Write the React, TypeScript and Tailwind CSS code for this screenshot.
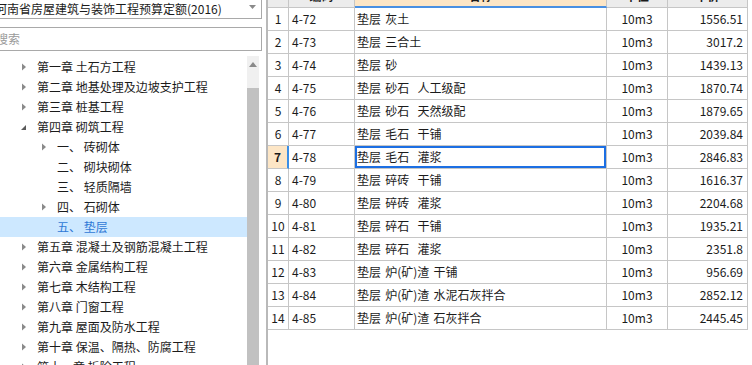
import React from "react";

type TreeItem = {
  level: 1 | 2;
  label: string;
  arrow: "right" | "down" | "none";
  selected?: boolean;
};

const treeItems: TreeItem[] = [
  { level: 1, label: "第一章 土石方工程", arrow: "right" },
  { level: 1, label: "第二章 地基处理及边坡支护工程", arrow: "right" },
  { level: 1, label: "第三章 桩基工程", arrow: "right" },
  { level: 1, label: "第四章 砌筑工程", arrow: "down" },
  { level: 2, label: "一、 砖砌体", arrow: "right" },
  { level: 2, label: "二、 砌块砌体", arrow: "none" },
  { level: 2, label: "三、 轻质隔墙", arrow: "none" },
  { level: 2, label: "四、 石砌体", arrow: "right" },
  { level: 2, label: "五、 垫层", arrow: "none", selected: true },
  { level: 1, label: "第五章 混凝土及钢筋混凝土工程", arrow: "right" },
  { level: 1, label: "第六章 金属结构工程", arrow: "right" },
  { level: 1, label: "第七章 木结构工程", arrow: "right" },
  { level: 1, label: "第八章 门窗工程", arrow: "right" },
  { level: 1, label: "第九章 屋面及防水工程", arrow: "right" },
  { level: 1, label: "第十章 保温、隔热、防腐工程", arrow: "right" },
  { level: 1, label: "第十一章 拆除工程", arrow: "right" },
];

const rows = [
  ["4-72", "垫层 灰土", "1556.51"],
  ["4-73", "垫层 三合土", "3017.2"],
  ["4-74", "垫层 砂", "1439.13"],
  ["4-75", "垫层 砂石  人工级配", "1870.74"],
  ["4-76", "垫层 砂石  天然级配", "1879.65"],
  ["4-77", "垫层 毛石  干铺", "2039.84"],
  ["4-78", "垫层 毛石  灌浆", "2846.83"],
  ["4-79", "垫层 碎砖  干铺", "1616.37"],
  ["4-80", "垫层 碎砖  灌浆", "2204.68"],
  ["4-81", "垫层 碎石  干铺", "1935.21"],
  ["4-82", "垫层 碎石  灌浆", "2351.8"],
  ["4-83", "垫层 炉(矿)渣 干铺", "956.69"],
  ["4-84", "垫层 炉(矿)渣 水泥石灰拌合", "2852.12"],
  ["4-85", "垫层 炉(矿)渣 石灰拌合", "2445.45"],
];

function Arrow({ kind }: { kind: TreeItem["arrow"] }) {
  if (kind === "none") return <span className="w-[7px] shrink-0" />;
  if (kind === "down")
    return (
      <svg width="7" height="7" viewBox="0 0 7 7" className="shrink-0">
        <polygon points="6,1 6,6 1,6" fill="#5a5a5a" />
      </svg>
    );
  return (
    <svg width="7" height="8" viewBox="0 0 7 8" className="shrink-0">
      <polygon points="2,0.5 6,4 2,7.5" fill="#8a8a8a" />
    </svg>
  );
}

export default function App() {
  return (
    <div
      className="flex h-[365px] w-[752px] overflow-hidden bg-white text-[12px] text-[#1b1b1b]"
      style={{ fontFamily: '"Noto Sans CJK SC", "Noto Sans", sans-serif' }}
    >
      {/* left: quota library + chapter tree */}
      <div className="flex w-[262px] shrink-0 flex-col">
        <div className="flex h-[19px] items-center justify-between overflow-hidden border-r border-b border-[#a9a9a9]">
          <span className="-ml-[5px] whitespace-nowrap leading-none">
            河南省房屋建筑与装饰工程预算定额(2016)
          </span>
          <svg width="7" height="5" viewBox="0 0 7 5" className="mr-[5px] mb-[3px] shrink-0">
            <polygon points="0,0 7,0 3.5,4" fill="#8a8a8a" />
          </svg>
        </div>

        <div className="mt-[8px] flex h-[24px] items-center overflow-hidden border-y border-r border-[#a9a9a9]">
          <span className="-ml-[4px] text-[#9a9a9a] leading-none">搜索</span>
        </div>

        <div className="mt-[5px] flex min-h-0 flex-1">
          <div className="flex-1 pt-[1px]">
            {treeItems.map((item) => (
              <div
                key={item.label}
                className={`flex h-[20px] items-center whitespace-pre ${
                  item.selected ? "bg-[#cde8ff] text-[#2f79d6]" : ""
                } ${item.level === 1 ? "pl-[20px]" : "pl-[40px]"}`}
              >
                <Arrow kind={item.arrow} />
                <span className="ml-[10px]">{item.label}</span>
              </div>
            ))}
          </div>
          <div className="flex w-[12px] flex-col bg-[#f0f0f0]">
            <div className="flex h-[16px] items-center justify-center">
              <svg width="8" height="5" viewBox="0 0 8 5">
                <polygon points="0,5 8,5 4,0" fill="#8a8a8a" />
              </svg>
            </div>
            <div className="mt-[16px] flex-1 bg-[#c1c1c1]" />
          </div>
          <div className="w-[3px]" />
        </div>
      </div>

      <div className="w-[4px] shrink-0" />

      {/* right: quota grid */}
      <div className="flex-1 overflow-hidden border-l-2 border-[#b9b9b9]">
        <div className="-mt-[15px] grid grid-cols-[21px_66px_252px_61px_80px] leading-none">
          <div className="h-[23px] border-r border-b border-[#c6c6c6] bg-[#ececec]" />
          <div className="flex h-[23px] items-center justify-center border-r border-b border-[#c6c6c6] bg-[#ececec] font-bold">
            编码
          </div>
          <div className="flex h-[23px] items-center justify-center border-r border-b-2 border-[#c6c6c6] border-b-[#4a90e2] bg-[#fde6c6] font-bold">
            名称
          </div>
          <div className="flex h-[23px] items-center justify-center border-r border-b border-[#c6c6c6] bg-[#ececec] font-bold">
            单位
          </div>
          <div className="flex h-[23px] items-center justify-center border-r border-b border-[#c6c6c6] bg-[#ececec] font-bold">
            单价
          </div>

          {rows.map(([code, name, price], i) => {
            const active = i === 6;
            return (
              <React.Fragment key={code}>
                <div
                  className={`flex h-[23px] items-center justify-center border-b border-[#c6c6c6] ${
                    active
                      ? "border-r-2 border-r-[#3a8ee6] bg-[#fde6c6] font-bold"
                      : "border-r"
                  }`}
                >
                  {i + 1}
                </div>
                <div className="flex h-[23px] items-center border-r border-b border-[#c6c6c6] pl-[3px]">
                  {code}
                </div>
                <div
                  className={`flex h-[23px] items-center whitespace-pre border-r border-b border-[#c6c6c6] pl-[2px] [word-spacing:1.5px] ${
                    active ? "shadow-[inset_0_0_0_2px_#1c6fe3]" : ""
                  }`}
                >
                  {name}
                </div>
                <div className="flex h-[23px] items-center justify-center border-r border-b border-[#c6c6c6]">
                  10m3
                </div>
                <div className="flex h-[23px] items-center justify-end border-r border-b border-[#c6c6c6] pr-[4px]">
                  {price}
                </div>
              </React.Fragment>
            );
          })}
        </div>
      </div>
    </div>
  );
}
